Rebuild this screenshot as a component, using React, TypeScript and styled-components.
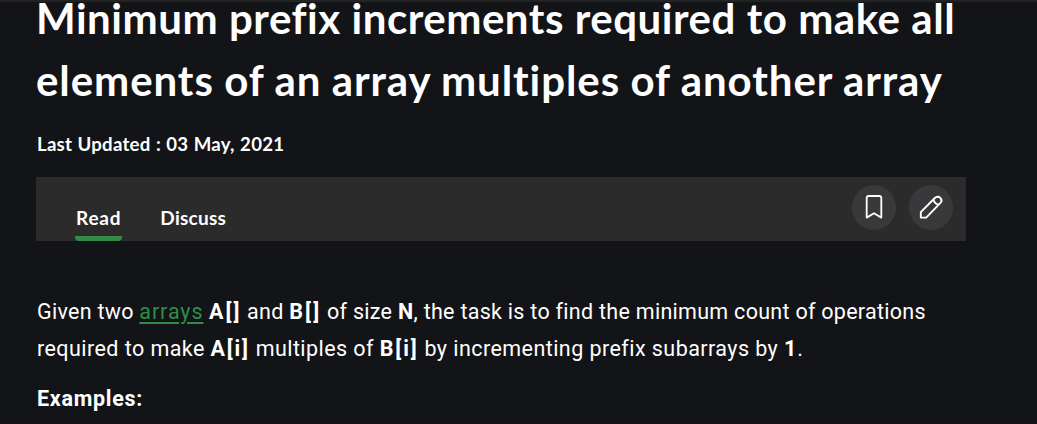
import React from 'react';
import styled, { createGlobalStyle } from 'styled-components';

const GlobalStyle = createGlobalStyle`
  * { box-sizing: border-box; }
  html, body { margin: 0; background: #131417; overflow: hidden; }
`;

const Page = styled.main`
  width: 1037px;
  height: 424px;
  overflow: hidden;
  padding: 0 71px 0 36px;
  background: #131417;
  border-top: 2px solid #232323;
  border-bottom: 1px solid #190f16;
  color: #fff;
  font-family: Lato, sans-serif;
`;

const Title = styled.h1`
  margin: -15px 0 0;
  font-size: 42px;
  font-weight: 700;
  line-height: 62px;
`;

const Line = styled.span<{ $spacing: number; $word?: number }>`
  display: block;
  white-space: nowrap;
  letter-spacing: ${({ $spacing }) => $spacing}px;
  word-spacing: ${({ $word = 0 }) => $word}px;
`;

const Updated = styled.p`
  margin: 19px 0 0 1px;
  height: 28px;
  font-size: 18.6px;
  font-weight: 700;
  line-height: 28px;
  letter-spacing: 0.25px;
  word-spacing: 0.6px;
`;

const TabBar = styled.nav`
  display: flex;
  justify-content: space-between;
  width: 930px;
  height: 64px;
  margin-top: 19px;
  padding: 0 13px 0 39px;
  background: #2b2b2b;
`;

const Tabs = styled.div`
  display: flex;
  gap: 37px;
`;

const Tab = styled.div<{ $active?: boolean; $spacing: number }>`
  height: 64px;
  padding: 28px 1px 0;
  font-size: 19px;
  font-weight: 700;
  line-height: 25px;
  letter-spacing: ${({ $spacing }) => $spacing}px;
  background: ${({ $active }) => ($active ? 'linear-gradient(#2f8d46, #2f8d46) bottom / 100% 5px no-repeat' : 'none')};
  border-radius: 0 0 4px 4px;
`;

const Actions = styled.div`
  display: flex;
  gap: 13px;
  padding-top: 8px;
`;

const RoundButton = styled.button`
  display: flex;
  align-items: center;
  justify-content: center;
  width: 44px;
  height: 45px;
  padding: 0 0 2px;
  border: 0;
  border-radius: 50%;
  background: #39393b;
  color: #fff;
`;

const Article = styled.article`
  margin: 52px 0 0 1px;
  font-family: Roboto, sans-serif;
  font-size: 21.5px;
  line-height: 37px;

  p { margin: 0 0 13px; }
`;

const Strong = styled.b<{ $spacing?: number }>`
  letter-spacing: ${({ $spacing = 0.5 }) => $spacing}px;
`;

const Link = styled.a`
  color: #2f8d46;
  letter-spacing: 0.9px;
  text-decoration: underline;
  text-decoration-thickness: 2px;
  text-underline-offset: 3px;
  text-decoration-skip-ink: auto;
`;

export default function App() {
  return (
    <>
      <GlobalStyle />
      <Page>
        <Title>
          <Line $spacing={0.52} $word={0.1}>Minimum prefix increments required to make all</Line>
          <Line $spacing={0.93} $word={-0.7}>elements of an array multiples of another array</Line>
        </Title>
        <Updated>Last Updated : 03 May, 2021</Updated>
        <TabBar>
          <Tabs>
            <Tab $active $spacing={0.8}>Read</Tab>
            <Tab $spacing={0.25}>Discuss</Tab>
          </Tabs>
          <Actions>
            <RoundButton aria-label="Bookmark">
              <svg width="18" height="26" viewBox="0 0 18 26" fill="none" stroke="currentColor" strokeWidth="1.8">
                <path d="M1.7 23.6V4Q1.7 2 3.7 2H14.3Q16.3 2 16.3 4V23.6L9 19.3Z" strokeLinejoin="round" />
              </svg>
            </RoundButton>
            <RoundButton aria-label="Edit">
              <svg width="26" height="26" viewBox="0 0 26 26" fill="none" stroke="currentColor" strokeWidth="1.9" strokeLinejoin="round">
                <path d="M2.8 23.6V18.2L16.8 4C18.5 2.3 20.9 2.4 22.3 3.9C23.8 5.4 23.8 7.6 22.2 9.2L8.2 23.6Z" />
                <path d="M15.5 5.3Q16.2 9.4 20.7 10.7" />
              </svg>
            </RoundButton>
          </Actions>
        </TabBar>
        <Article>
          <p>
            <Line $spacing={0.28}>
              Given two <Link>arrays</Link> <Strong $spacing={2}>A[]</Strong> and <Strong $spacing={2.2}>B[]</Strong> of size <Strong>N</Strong>, the task is to find the minimum count of operations
            </Line>
            <Line $spacing={0.44}>
              required to make <Strong $spacing={1.8}>A[i]</Strong> multiples of <Strong $spacing={1.9}>B[i]</Strong> by incrementing prefix subarrays by <Strong $spacing={1}>1</Strong>.
            </Line>
          </p>
          <p><Strong $spacing={0.7}>Examples:</Strong></p>
        </Article>
      </Page>
    </>
  );
}
